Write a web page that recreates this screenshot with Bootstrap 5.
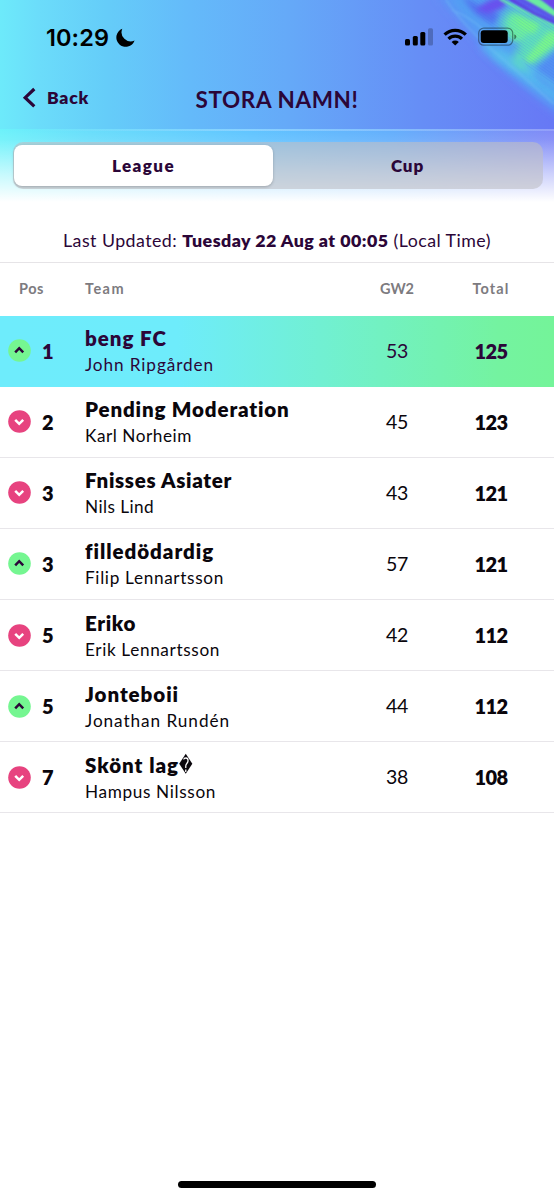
<!DOCTYPE html>
<html lang="en">
<head>
<meta charset="utf-8">
<meta name="viewport" content="width=device-width, initial-scale=1">
<title>STORA NAMN!</title>
<link href="https://cdn.jsdelivr.net/npm/bootstrap@5.3.0/dist/css/bootstrap.min.css" rel="stylesheet">
<style>
body{font-family:Lato,"Liberation Sans",sans-serif;color:#0a060c;background:#fff;width:554px;height:1200px;overflow:hidden;line-height:1}
.plum{color:#2b0638}
.hero{height:129px;background:linear-gradient(90deg,#6deafa 0,#6bdcfa 40px,#65cdf9 105px,#64bafa 190px,#65a9f8 290px,#668ef6 420px,#6778f5 554px)}
.swirl{position:absolute;top:0;right:0}
.status{height:74px}
.clock{font-family:Inter,"Liberation Sans",sans-serif;font-weight:600;font-size:23.5px;color:#000;width:64px;padding-top:1px}
.titlebar{height:55px}
.side{width:150px}
.tabs-zone{height:76px;padding:13px 11px 0 13px;background:linear-gradient(180deg,rgba(255,255,255,0) 0,rgba(255,255,255,.08) 14%,rgba(255,255,255,.62) 60%,#fff 96%),linear-gradient(90deg,#6cf2fa 0,#67ddfb 90px,#5fc4ff 250px,#62aefc 390px,#7694f8 500px,#8089f7 554px)}
.tabs-zone::before{content:"";position:absolute;left:0;right:0;top:0;height:1.5px;background:linear-gradient(90deg,rgba(255,255,255,0) 5%,rgba(200,230,255,.4) 45%,rgba(200,220,255,.25))}
.segment{height:47px;border-radius:10px;background:rgba(190,190,196,.6);padding:3px 1px}
.segment .nav-link{height:41px;padding:0;border-radius:8px;color:#2b0638;font-weight:800;font-size:17px;display:flex;align-items:center;justify-content:center}
.segment .nav-link.active{background:#fff;color:#2b0638;box-shadow:0 1px 3px rgba(0,0,0,.22)}
.updated{height:58px;padding-top:14px;border-bottom:1px solid #e6e4e7;font-size:17.8px}
.grid-row{display:grid;grid-template-columns:85px 266px 92px 96px 15px;align-items:center}
.heads{height:52.6px;padding-bottom:1px;font-size:14.5px;font-weight:700;color:#7d7b7f}
.team-row{height:71.1px;border-bottom:1px solid #e8e6ea}
.team-row.mine{background:linear-gradient(90deg,#6eecfc 0,#6eecfb 32%,#71f0d2 58%,#74f3a0 90%,#74f499);color:#2b0638;border-color:transparent}
.pos{padding-left:8px}
.rank{margin-left:11px;font-size:20px;font-weight:800;width:20px}
.team{font-size:20.5px;font-weight:800;line-height:24px;white-space:nowrap}
.manager{font-size:17.2px;line-height:20px;margin-top:5px;white-space:nowrap}
.gw{font-size:19.5px}.total{font-size:20px;font-weight:800}
.fit{display:inline-block;white-space:nowrap}
.unknown{font:20px/24px "DejaVu Sans",sans-serif;width:13px;transform:scaleX(.66);transform-origin:0 50%}
.home{width:198px;height:7px;border-radius:4px;background:#000;bottom:12px;left:178px}
</style>
</head>
<body class="position-relative">
<header class="hero position-relative">
  <svg class="swirl" width="124" height="129" viewBox="430 0 124 129" aria-hidden="true">
    <defs>
      <filter id="b1" x="-30%" y="-30%" width="160%" height="160%"><feGaussianBlur stdDeviation="1"/></filter>
      <filter id="b2" x="-30%" y="-30%" width="160%" height="160%"><feGaussianBlur stdDeviation="2.6"/></filter>
      <filter id="b4" x="-40%" y="-40%" width="180%" height="180%"><feGaussianBlur stdDeviation="4"/></filter>
      <pattern id="lines" width="2.4" height="2.4" patternUnits="userSpaceOnUse" patternTransform="rotate(35)"><rect width="2.4" height="1" fill="#3c6cf0" opacity=".16"/></pattern>
    </defs>
    <path d="M436 -6Q464 24 482 46Q508 76 562 118V-6Z" fill="#5a95f6" filter="url(#b4)"/>
    <path d="M446 -6Q466 22 490 46Q514 74 562 106V-6Z" fill="#539ff3" filter="url(#b4)"/>
    <path d="M484 44Q514 70 560 98" stroke="#54b6f0" stroke-width="9" fill="none" filter="url(#b4)"/>
    <path d="M496 52L538 78" stroke="#58c8ea" stroke-width="5" fill="none" filter="url(#b4)"/>
    <path d="M462 -4Q478 6 500 14L494 24Q474 18 462 -4Z" fill="#5274f0" filter="url(#b2)"/>
    <path d="M476 10Q490 -4 508 -4L504 8L488 14Z" fill="#6a50ee" filter="url(#b2)"/>
    <path d="M500 28Q502 10 514 8L562 28V44L540 62L524 70L512 62L520 44Z" fill="#5fe0bb" filter="url(#b4)"/>
    <path d="M508 22Q510 12 520 16L534 26L522 40L510 40Z" fill="#6cf0a0" filter="url(#b2)"/>
    <path d="M536 46L548 32L558 32V42L532 62L522 64Z" fill="#78f98a" filter="url(#b2)"/>
    <path d="M514 16L540 24L534 34L520 28Z" fill="#74f88c" filter="url(#b2)"/>
    <path d="M558 50L540 66L534 74L558 92Z" fill="#5290f2" filter="url(#b2)"/>
    <path d="M520 60L558 88" stroke="#57bcee" stroke-width="4" fill="none" filter="url(#b2)"/>
    <path d="M506 -2L530 10L558 24V-2Z" fill="#5a62ee" filter="url(#b1)"/>
    <path d="M500 -1L532 15L556 27" stroke="#66e6b0" stroke-width="3" fill="none" filter="url(#b1)"/>
    <path d="M510 -1L534 13L556 23" stroke="#5d37e0" stroke-width="3" fill="none" filter="url(#b1)"/>
    <path d="M522 -2L540 8L556 18V10L538 -2Z" fill="#6beba0" filter="url(#b1)"/>
    <path d="M518 -2L556 19" stroke="#5a4ae6" stroke-width="1.5" filter="url(#b1)"/>
    <path d="M541 -2L557 12V-2Z" fill="#6a46ea" filter="url(#b1)"/>
    <path d="M468 0Q484 26 510 42L528 68L554 86V20L512 0Z" fill="url(#lines)"/>
    <path d="M446 0Q464 26 490 48T554 104M452 10Q468 16 484 30L500 45" stroke="#79c4f6" stroke-width="1.3" fill="none" opacity=".5" filter="url(#b1)"/>
  </svg>
  <div class="status position-relative d-flex align-items-center">
    <div class="d-flex align-items-center" style="padding-left:46px">
      <span class="clock"><span class="fit" data-w="63">10:29</span></span>
      <svg class="ms-1" width="22" height="22" viewBox="0 0 22 22"><path d="M8.4 1.8A9.4 9.4 0 1 0 20.7 13.7A9.2 9.2 0 0 1 8.4 1.8Z" transform="translate(-.1 .9)"/></svg>
    </div>
    <svg class="ms-auto" width="114" height="22" viewBox="403 26 114 22" style="margin-right:37px">
      <rect x="405" y="39" width="5" height="6.5" rx="1.5"/><rect x="412.8" y="36" width="5" height="9.5" rx="1.5"/><rect x="420.3" y="32" width="5" height="13.5" rx="1.5"/><rect x="428" y="28.3" width="5" height="17.2" rx="1.5" opacity=".23"/>
      <g fill="none" stroke="#000" stroke-width="3.2"><path d="M444.6 34.7A15 15 0 0 1 465.8 34.7"/><path d="M448.5 38.9A9.6 9.6 0 0 1 461.9 38.9"/></g>
      <path d="M451.6 42A5.2 5.2 0 0 1 458.8 42L455.2 45.6Z"/>
      <rect x="478.7" y="28.2" width="34" height="17" rx="5" fill="none" stroke="#000" stroke-opacity=".4" stroke-width="1.3"/><rect x="480.7" y="30.3" width="27" height="12.8" rx="3"/><path d="M514.3 34.2Q516.4 35 516.4 36.8T514.3 39.5Z" opacity=".45"/>
    </svg>
  </div>
  <div class="titlebar position-relative d-flex plum align-items-start">
    <a href="#" class="side d-flex align-items-center text-decoration-none plum" style="padding:13px 0 0 22px">
      <svg width="15" height="21" viewBox="0 0 15 21" fill="none" stroke="#2b0638" stroke-width="3.2"><path d="M12.3 2L3.2 10.7L12.3 19.3"/></svg>
      <b class="fit" data-w="42" style="font-size:17.5px;font-weight:800;margin-left:10px">Back</b>
    </a>
    <h1 class="flex-fill text-center m-0" style="font-size:22.5px;font-weight:700;padding-top:12px"><span class="fit" data-w="163">STORA NAMN!</span></h1>
    <div class="side"></div>
  </div>
</header>
<div class="tabs-zone position-relative">
  <div class="segment nav d-flex flex-nowrap">
    <a class="nav-link active" href="#" style="width:259px"><span class="fit" data-w="63">League</span></a>
    <a class="nav-link flex-fill" href="#"><span class="fit" data-w="33">Cup</span></a>
  </div>
</div>
<div class="updated plum d-flex align-items-center justify-content-center"><div class="fit" data-w="428">Last Updated: <b style="font-weight:800">Tuesday 22 Aug at 00:05</b> (Local Time)</div></div>
<div class="grid-row heads"><span style="padding-left:19px"><span class="fit" data-w="25">Pos</span></span><span><span class="fit" data-w="40">Team</span></span><span class="text-center"><span class="fit" data-w="34">GW2</span></span><span class="text-center"><span class="fit" data-w="37">Total</span></span></div>
<main id="league"></main>
<div class="home position-absolute"></div>
<script src="https://cdn.jsdelivr.net/npm/bootstrap@5.3.0/dist/js/bootstrap.bundle.min.js"></script>
<script>
// direction, position, team, team width, manager, manager width, gameweek, total
const rows=[
 ['up',1,'beng FC',82,'John Ripgården',129,53,125],
 ['down',2,'Pending Moderation',205,'Karl Norheim',107,45,123],
 ['down',3,'Fnisses Asiater',147,'Nils Lind',69,43,121],
 ['up',3,'filledödardig',129,'Filip Lennartsson',139,57,121],
 ['down',5,'Eriko',51,'Erik Lennartsson',135,42,112],
 ['up',5,'Jonteboii',94,'Jonathan Rundén',145,44,112],
 ['down',7,'Skönt lag',94,'Hampus Nilsson',131,38,108]
];
const arrow=d=>d==='up'
 ?'<svg width="23" height="23" viewBox="0 0 23 23"><circle cx="11.5" cy="11.5" r="11.3" fill="#75f691"/><path d="M7.2 13.3L11.2 9.2L15.2 13.3" fill="none" stroke="#2b0638" stroke-width="2.5"/></svg>'
 :'<svg width="23" height="23" viewBox="0 0 23 23"><circle cx="11.5" cy="11.5" r="11.3" fill="#e7437f"/><path d="M7.2 9.8L11.2 13.8L15.2 9.8" fill="none" stroke="#fff" stroke-width="2.5"/></svg>';
document.getElementById('league').innerHTML=rows.map(([d,p,t,tw,m,mw,g,s])=>`
<div class="grid-row team-row ${p===1?'mine':''}">
 <div class="pos d-flex align-items-center">${arrow(d)}<span class="rank">${p}</span></div>
 <div><div class="team d-flex"><span class="fit" data-w="${tw}">${t}</span>${p===7?'<span class="unknown">�</span>':''}</div><div class="manager"><span class="fit" data-w="${mw}">${m}</span></div></div>
 <div class="gw text-center"><span class="fit" data-w="22">${g}</span></div>
 <div class="total text-center"><span class="fit" data-w="33">${s}</span></div>
</div>`).join('');
// spread each label over its set width by tracking
document.querySelectorAll('.fit').forEach(e=>{
 const n=[...e.textContent].length;
 e.style.letterSpacing=((e.dataset.w-e.getBoundingClientRect().width)/n).toFixed(3)+'px';
});
</script>
</body>
</html>
